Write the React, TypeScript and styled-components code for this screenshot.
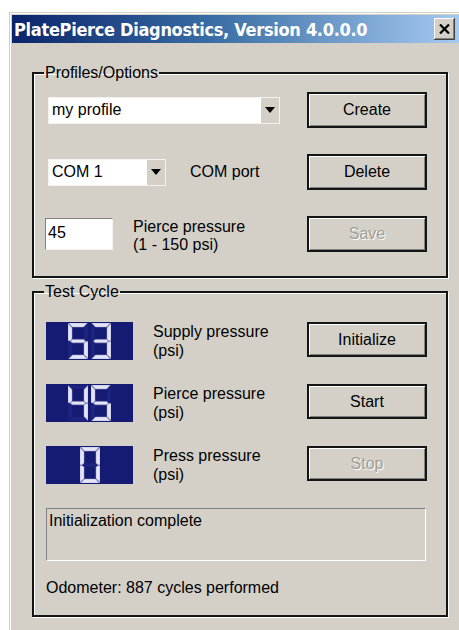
import React from 'react';
import styled, { createGlobalStyle } from 'styled-components';

const GlobalStyle = createGlobalStyle`
  html, body {
    margin: 0;
    padding: 0;
    background: #ffffff;
    overflow: hidden;
  }
  body {
    font-family: 'Liberation Sans', Arial, sans-serif;
    font-size: 16px;
    color: #000;
  }
`;

const FACE = '#d4d0c8';

const Window = styled.div`
  margin: 12px 0 0 9px;
  width: 452px;
  height: 620px;
  box-sizing: border-box;
  background: ${FACE};
  border-top: 1px solid ${FACE};
  border-left: 1px solid ${FACE};
  box-shadow: inset 1px 1px 0 #ffffff;
  padding: 2px 0 0 2px;
  display: flex;
  flex-direction: column;
`;

const TitleBar = styled.div`
  height: 28px;
  display: flex;
  align-items: center;
  justify-content: space-between;
  padding: 0 2px 0 2px;
  background: linear-gradient(to right, #0a246a 0%, #3a6ea5 45%, #a6caf0 100%);
`;

const Title = styled.span`
  color: #fff;
  font-family: 'DejaVu Sans', Verdana, sans-serif;
  font-weight: bold;
  font-size: 18px;
  font-stretch: condensed;
  letter-spacing: -0.3px;
  white-space: nowrap;
`;

const CloseButton = styled.button`
  width: 21px;
  height: 22px;
  margin-right: 4px;
  padding: 0;
  display: flex;
  align-items: center;
  justify-content: center;
  background: ${FACE};
  border: none;
  box-shadow: inset -1px -1px 0 #404040, inset 1px 1px 0 #ffffff, inset -2px -2px 0 #808080;
`;

const Content = styled.div`
  padding: 21px 0 0 20px;
  display: flex;
  flex-direction: column;
  gap: 5px;
`;

const Group = styled.fieldset<{ $height: number; $padTop: number; $gap: number }>`
  width: 416px;
  height: ${(p) => p.$height}px;
  box-sizing: border-box;
  margin: 0;
  padding: ${(p) => p.$padTop}px 19px 0 11px;
  border: 2px solid #141414;
  box-shadow: inset 1px 1px 0 #ffffff, 1px 1px 0 #ffffff;
  display: flex;
  flex-direction: column;
  gap: ${(p) => p.$gap}px;
`;

const Legend = styled.legend`
  margin-left: -1px;
  padding: 0 1px;
  font-size: 16px;
  line-height: 18px;
`;

const Row = styled.div`
  display: flex;
  align-items: center;
  justify-content: space-between;
  height: 36px;
`;

const Left = styled.div<{ $gap?: number }>`
  display: flex;
  align-items: center;
  gap: ${(p) => p.$gap ?? 20}px;
`;

const Button = styled.button<{ $disabled?: boolean }>`
  width: 120px;
  height: 36px;
  padding: 0;
  font-family: 'Liberation Sans', Arial, sans-serif;
  font-size: 16px;
  background: ${FACE};
  border: 2px solid #141414;
  box-shadow: inset 1px 1px 0 #ffffff, inset -1px -1px 0 #808080;
  color: ${(p) => (p.$disabled ? '#a19e97' : '#000')};
  text-shadow: ${(p) => (p.$disabled ? '1px 1px 0 #ffffff' : 'none')};
`;

const Combo = styled.div<{ $width: number }>`
  width: ${(p) => p.$width}px;
  height: 27px;
  margin-left: 3px;
  box-sizing: border-box;
  background: #fff;
  border: 1px solid #f4f3f0;
  display: flex;
  align-items: center;
  justify-content: space-between;
`;

const ComboText = styled.span`
  padding-left: 3px;
  font-size: 16px;
`;

const ComboArrow = styled.div`
  width: 18px;
  height: 25px;
  background: ${FACE};
  display: flex;
  align-items: center;
  justify-content: center;
`;

const TextInput = styled.div`
  width: 68px;
  height: 32px;
  box-sizing: border-box;
  background: #fff;
  border-top: 1px solid #808080;
  border-left: 1px solid #808080;
  border-right: 1px solid #f4f3f0;
  border-bottom: 1px solid #f4f3f0;
  padding: 5px 0 0 2px;
  font-size: 16px;
`;

const Label = styled.div`
  font-size: 16px;
  line-height: 18px;
`;

const RangeLabel = styled(Label)`
  margin-top: 4px;
`;

const CycleRow = styled.div`
  display: flex;
  align-items: flex-start;
  justify-content: space-between;
  height: 38px;
`;

const Lcd = styled.div`
  width: 87px;
  height: 38px;
  background: #151b72;
  display: flex;
  align-items: center;
  justify-content: center;
  gap: 3px;
  margin-left: 1px;
`;

const CycleLabel = styled(Label)`
  margin-top: 1px;
  line-height: 19px;
`;

const CycleButton = styled(Button)`
  height: 35px;
  margin-top: 1px;
`;

const StatusBox = styled.div`
  width: 380px;
  height: 53px;
  box-sizing: border-box;
  margin: 1px 0 0 1px;
  border-top: 1px solid #808080;
  border-left: 1px solid #808080;
  border-right: 1px solid #ffffff;
  border-bottom: 1px solid #ffffff;
  padding: 3px 0 0 2px;
  font-size: 16px;
`;

const Odometer = styled.div`
  margin: -6px 0 0 1px;
  font-size: 16px;
`;

const SEGMENTS: Record<string, string> = {
  a: '0.6,0 19.4,0 15.6,4 4.4,4',
  b: '20,0.6 20,17.4 18,18 16,16 16,4.4',
  c: '20,18.6 20,35.4 16,31.6 16,20 18,18.6',
  d: '0.6,36 19.4,36 15.6,32 4.4,32',
  e: '0,18.6 2,18.6 4,20 4,31.6 0,35.4',
  f: '0,0.6 4,4.4 4,16 2,18 0,17.4',
  g: '2.4,18.2 4.4,16.4 15.6,16.4 17.6,18.2 15.6,19.8 4.4,19.8',
};

const DIGITS: Record<string, string> = {
  '0': 'abcdef',
  '1': 'bc',
  '2': 'abdeg',
  '3': 'abcdg',
  '4': 'bcfg',
  '5': 'acdfg',
  '6': 'acdefg',
  '7': 'abc',
  '8': 'abcdefg',
  '9': 'abcdfg',
};

const Digit: React.FC<{ value: string }> = ({ value }) => {
  const lit = DIGITS[value] ?? '';
  return (
    <svg width="20" height="36" viewBox="0 0 20 36">
      {Object.entries(SEGMENTS).map(([key, pts]) => (
        <polygon
          key={key}
          points={pts}
          fill={lit.includes(key) ? '#e4e4f4' : '#1d2480'}
          stroke={lit.includes(key) ? '#9fa3d4' : 'none'}
          strokeWidth={0.5}
        />
      ))}
    </svg>
  );
};

const LcdDisplay: React.FC<{ value: number }> = ({ value }) => (
  <Lcd>
    {String(value)
      .split('')
      .map((d, i) => (
        <Digit key={i} value={d} />
      ))}
  </Lcd>
);

const Arrow = () => (
  <svg width="10" height="6" viewBox="0 0 10 6">
    <polygon points="0,0 10,0 5,6" fill="#000" />
  </svg>
);

const CloseIcon = () => (
  <svg width="11" height="10" viewBox="0 0 11 10">
    <path d="M1 0.5 L10 9.5 M10 0.5 L1 9.5" stroke="#000" strokeWidth="2.2" />
  </svg>
);

const readings = [
  { value: 53, label: 'Supply pressure', action: 'Initialize', disabled: false },
  { value: 45, label: 'Pierce pressure', action: 'Start', disabled: false },
  { value: 0, label: 'Press pressure', action: 'Stop', disabled: true },
];

export default function App() {
  return (
    <>
      <GlobalStyle />
      <Window>
        <TitleBar>
          <Title>PlatePierce Diagnostics, Version 4.0.0.0</Title>
          <CloseButton>
            <CloseIcon />
          </CloseButton>
        </TitleBar>
        <Content>
          <Group $height={214} $padTop={10} $gap={26}>
            <Legend>Profiles/Options</Legend>
            <Row>
              <Combo $width={232}>
                <ComboText>my profile</ComboText>
                <ComboArrow>
                  <Arrow />
                </ComboArrow>
              </Combo>
              <Button>Create</Button>
            </Row>
            <Row>
              <Left $gap={24}>
                <Combo $width={118}>
                  <ComboText>COM 1</ComboText>
                  <ComboArrow>
                    <Arrow />
                  </ComboArrow>
                </Combo>
                <Label>COM port</Label>
              </Left>
              <Button>Delete</Button>
            </Row>
            <Row>
              <Left>
                <TextInput>45</TextInput>
                <RangeLabel>
                  Pierce pressure
                  <br />
                  (1 - 150 psi)
                </RangeLabel>
              </Left>
              <Button $disabled>Save</Button>
            </Row>
          </Group>
          <Group $height={334} $padTop={20} $gap={24}>
            <Legend>Test Cycle</Legend>
            {readings.map((r) => (
              <CycleRow key={r.action}>
                <Left>
                  <LcdDisplay value={r.value} />
                  <CycleLabel>
                    {r.label}
                    <br />
                    (psi)
                  </CycleLabel>
                </Left>
                <CycleButton $disabled={r.disabled}>{r.action}</CycleButton>
              </CycleRow>
            ))}
            <StatusBox>Initialization complete</StatusBox>
            <Odometer>Odometer: 887 cycles performed</Odometer>
          </Group>
        </Content>
      </Window>
    </>
  );
}
